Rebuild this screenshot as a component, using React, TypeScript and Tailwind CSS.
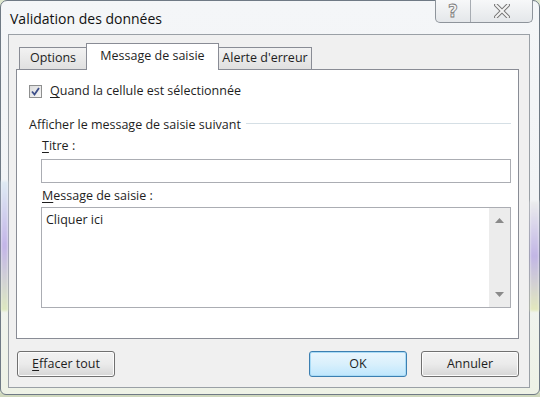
import React from "react";

const font = { fontFamily: '"Open Sans", "Noto Sans", "Liberation Sans", sans-serif' };

function U({ c }: { c: string }) {
  return <span className="underline underline-offset-[2px] decoration-[1px]">{c}</span>;
}

function Btn({ children, primary }: { children: React.ReactNode; primary?: boolean }) {
  return (
    <div
      className={
        "w-[98px] h-[26px] rounded-[3px] border flex items-center justify-center text-[12.5px] text-[#1e1e1e] " +
        (primary
          ? "border-[#3c7fb1] bg-gradient-to-b from-[#eaf6fd] via-[#d9f0fc] to-[#bee6fd] shadow-[inset_0_0_0_1px_#a9dbf6]"
          : "border-[#707070] bg-gradient-to-b from-[#f2f2f2] via-[#ebebeb] to-[#d6d6d6] shadow-[inset_0_0_0_1px_#fcfcfc]")
      }
    >
      {children}
    </div>
  );
}

export default function App() {
  return (
    <div className="relative w-[540px] h-[397px] overflow-hidden bg-[#dfe8cf]" style={font}>
      <div className="absolute left-0 right-0 bottom-0 h-[4px] bg-[#cfd8bd]" />
      {/* window */}
      <div className="relative flex flex-col w-[540px] h-[395px] rounded-t-[7px] rounded-b-[6px] border border-[#6f7a85] bg-gradient-to-b from-[#f4f6f8] via-[#f2f4f6] to-[#eef2e6]">
        <div className="absolute left-0 top-[180px] w-[7px] h-[130px] bg-gradient-to-b from-[#dbeaf4] via-[#b9a6e6] to-[#dbe8b4] opacity-80 blur-[1px]" />
        <div className="absolute right-0 top-[200px] w-[9px] h-[110px] bg-gradient-to-b from-[#ececec] via-[#b7a7e3] to-[#e2e8b0] opacity-80 blur-[1px]" />

        {/* title bar */}
        <div className="h-[33px] flex items-center pl-[9px] pt-[2px]">
          <span className="text-[14px] text-[#111]">Validation des données</span>
        </div>
        <div className="absolute top-[-1px] right-[6px] flex h-[23px] border border-t-0 border-[#8e949b] rounded-b-[5px] bg-gradient-to-b from-[#f7f8f9] to-[#e4e7ea] overflow-hidden">
          <div className="w-[35px] flex items-center justify-center border-r border-[#a7acb2]">
            <span className="text-[17px] font-bold leading-none text-[#f4f4f4] [-webkit-text-stroke:0.8px_#777]" style={{ fontFamily: '"DejaVu Sans", sans-serif' }}>?</span>
          </div>
          <div className="w-[61px] flex items-center justify-center">
            <svg width="16" height="14" viewBox="0 0 16 14">
              <path d="M2 1 L14 13 M14 1 L2 13" stroke="#777" strokeWidth="4" strokeLinecap="square" />
              <path d="M2 1 L14 13 M14 1 L2 13" stroke="#f4f4f4" strokeWidth="2" strokeLinecap="square" />
            </svg>
          </div>
        </div>

        {/* client area */}
        <div className="ml-[7px] mr-[9px] h-[354px] border border-[#9aa0a6] bg-[#f0f0f0] flex flex-col pl-[7px] pr-[10px] pt-[7px]">
          {/* tabs */}
          <div className="flex items-end h-[27px] pl-[3px] relative z-10">
            <div className="w-[68px] h-[22px] border border-b-0 border-[#898c95] bg-gradient-to-b from-[#f2f2f2] to-[#e0e0e0] flex items-center justify-center text-[12.5px] text-[#1e1e1e]">
              Options
            </div>
            <div className="w-[133px] h-[27px] -ml-[1px] -mb-[1px] border border-b-0 border-[#898c95] bg-white flex items-center justify-center text-[12.5px] text-[#1e1e1e] pb-[2px]">
              Message de saisie
            </div>
            <div className="w-[94px] h-[22px] -ml-[1px] border border-b-0 border-[#898c95] bg-gradient-to-b from-[#f2f2f2] to-[#e0e0e0] flex items-center justify-center text-[12.5px] text-[#1e1e1e]">
              Alerte d'erreur
            </div>
          </div>
          {/* panel */}
          <div className="h-[270px] border border-[#898c95] bg-white flex flex-col pl-[12px] pt-[14px] text-[12.5px] text-[#1e1e1e]">
            <div className="h-[14px] flex items-center gap-[8px]">
              <div className="w-[13px] h-[13px] border border-[#8e8f8f] bg-gradient-to-br from-[#dcdcdc] to-[#f6f6f6] flex items-center justify-center">
                <svg width="9" height="9" viewBox="0 0 9 9">
                  <path d="M1 4.5 L3.5 7.5 L8 1" stroke="#3d4f8a" strokeWidth="1.8" fill="none" />
                </svg>
              </div>
              <span><U c="Q" />uand la cellule est sélectionnée</span>
            </div>
            <div className="h-[14px] mt-[20px] flex items-center pr-[7px]">
              <span>Afficher le message de saisie suivant</span>
              <div className="flex-1 h-px bg-[#d5dfe5] ml-[5px] mt-[-3px]" />
            </div>
            <div className="h-[14px] mt-[7px] pl-[13px] flex items-center">
              <span><U c="T" />itre :</span>
            </div>
            <div className="mt-[6px] ml-[12px] w-[470px] h-[24px] border border-[#abadb3] bg-white" />
            <div className="h-[14px] mt-[6px] pl-[13px] flex items-center">
              <span><U c="M" />essage de saisie :</span>
            </div>
            <div className="mt-[4px] ml-[12px] w-[470px] h-[101px] border border-[#abadb3] bg-white flex">
              <div className="flex-1 pl-[4px] pt-[3px]">Cliquer ici</div>
              <div className="w-[21px] bg-[#ececec] flex flex-col items-center justify-between py-[10px]">
                <svg width="9" height="5" viewBox="0 0 9 5"><path d="M0 5 L4.5 0 L9 5 Z" fill="#8a8a8a" /></svg>
                <svg width="9" height="5" viewBox="0 0 9 5"><path d="M0 0 L4.5 5 L9 0 Z" fill="#8a8a8a" /></svg>
              </div>
            </div>
          </div>
          {/* buttons */}
          <div className="mt-[12px] flex items-center pl-[1px]">
            <Btn><span><U c="E" />ffacer tout</span></Btn>
            <div className="flex-1" />
            <Btn primary>OK</Btn>
            <div className="w-[14px]" />
            <Btn>Annuler</Btn>
          </div>
        </div>
      </div>
    </div>
  );
}
